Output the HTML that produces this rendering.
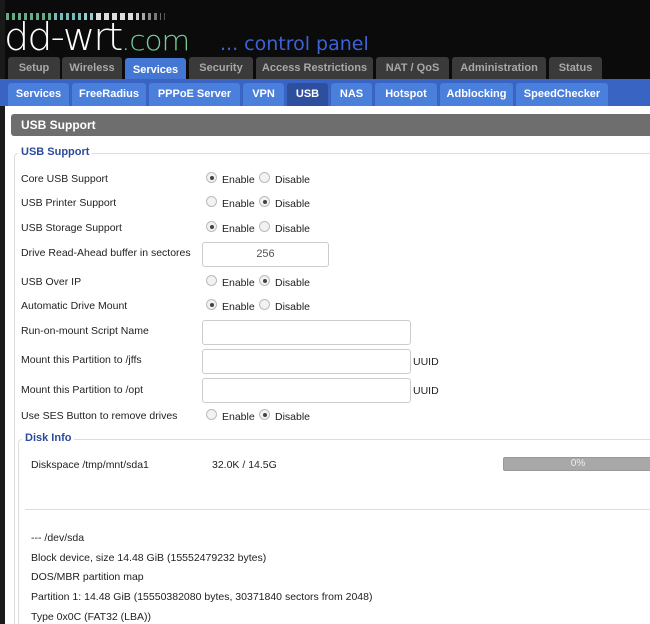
<!DOCTYPE html>
<html><head><style>
*{margin:0;padding:0;box-sizing:border-box}
html,body{width:650px;height:624px;overflow:hidden}
body{background:#fff;font-family:"Liberation Sans",sans-serif;font-size:11px;color:#222;position:relative}
.a{position:absolute}
.hdr{left:0;top:0;width:650px;height:80px;background:#0b0b0b}
.tab{position:absolute;top:57px;height:22px;background:#3a3a3a;color:#a8a8a8;font-weight:bold;font-size:11px;text-align:center;line-height:22px;border-radius:3px 3px 0 0}
.tab.on{background:#4477d4;color:#fff;top:58px;height:24px;line-height:24px}
.bar{left:0;top:79px;width:650px;height:27px;background:#3a64c4}
.st{position:absolute;top:83px;height:23px;background:#4a7fdc;color:#fff;font-weight:bold;font-size:11px;text-align:center;line-height:22px;border-radius:3px 3px 0 0}
.st.on{background:#2d4f9e}
.lbl{position:absolute;left:21px;font-size:10.5px}
.r{position:absolute;width:11px;height:11px;border-radius:50%;border:1px solid #bbb;background:#f2f2f2}
.r.c::after{content:"";position:absolute;left:3px;top:3px;width:4px;height:4px;border-radius:50%;background:#444}
.in{position:absolute;border:1px solid #ccc;border-radius:3px;background:#fff}
.bars{position:absolute;left:6px;top:13px;height:7px;display:flex;gap:3px}
.bars i{display:block;width:3px;height:7px;background:#6a8}
</style></head><body>
<div class="a hdr"></div>
<div class="a" style="left:0;top:0;width:5px;height:624px;background:#1a1a1a"></div>
<div class="bars"><i></i><i></i><i></i><i></i><i></i><i></i><i></i><i></i><i style="background:#7bb"></i><i style="background:#7bb"></i><i style="background:#7bb"></i><i style="background:#7bb"></i><i style="background:#7bb"></i><i style="background:#9cc"></i><i style="background:#9cc"></i><i style="background:#ddd;width:5px"></i><i style="background:#ddd;width:5px"></i><i style="background:#ddd;width:5px"></i><i style="background:#ddd;width:5px"></i><i style="background:#ddd;width:5px"></i><i style="background:#ccc"></i><i style="background:#aaa"></i><i style="background:#888"></i><i style="background:#777"></i><i style="background:#666;width:1px"></i><i style="background:#555;width:1px"></i></div>
<div class="a" style="left:4px;top:17px;color:#fff;font-size:38px;letter-spacing:-2px;font-family:'DejaVu Sans',sans-serif;font-weight:200;line-height:40px;transform:scaleX(1.05);transform-origin:left">dd-wrt<span style="font-size:28px;color:#7c9;letter-spacing:-1px">.com</span></div>
<div class="a" style="left:220px;top:33px;color:#3d62d6;font-size:19px;font-family:'DejaVu Sans',sans-serif">... control panel</div>
<div class="tab" style="left:8px;width:52px">Setup</div>
<div class="tab" style="left:62px;width:60px">Wireless</div>
<div class="tab on" style="left:125px;width:61px">Services</div>
<div class="tab" style="left:189px;width:64px">Security</div>
<div class="tab" style="left:256px;width:117px">Access Restrictions</div>
<div class="tab" style="left:376px;width:73px">NAT / QoS</div>
<div class="tab" style="left:452px;width:94px">Administration</div>
<div class="tab" style="left:549px;width:53px">Status</div>
<div class="a bar"></div>
<div class="st" style="left:8px;width:61px">Services</div>
<div class="st" style="left:72px;width:74px">FreeRadius</div>
<div class="st" style="left:149px;width:91px">PPPoE Server</div>
<div class="st" style="left:243px;width:41px">VPN</div>
<div class="st on" style="left:287px;width:41px">USB</div>
<div class="st" style="left:331px;width:41px">NAS</div>
<div class="st" style="left:375px;width:62px">Hotspot</div>
<div class="st" style="left:440px;width:73px">Adblocking</div>
<div class="st" style="left:516px;width:92px">SpeedChecker</div>
<div class="a" style="left:11px;top:114px;width:645px;height:22px;background:#6e6e6e;border-radius:3px;color:#fff;font-weight:bold;font-size:12px;line-height:22px;padding-left:10px">USB Support</div>
<div class="a" style="left:14px;top:153px;width:640px;height:480px;border:1px solid #ddd;border-radius:4px"></div>
<div class="a" style="left:18px;top:146px;background:#fff;padding:0 3px;color:#2b4b9a;font-weight:bold;font-size:11px">USB Support</div>
<div class="lbl" style="top:173px">Core USB Support</div>
<div class="lbl" style="top:197px">USB Printer Support</div>
<div class="lbl" style="top:222px">USB Storage Support</div>
<div class="lbl" style="top:247px">Drive Read-Ahead buffer in sectores</div>
<div class="lbl" style="top:276px">USB Over IP</div>
<div class="lbl" style="top:300px">Automatic Drive Mount</div>
<div class="lbl" style="top:325px">Run-on-mount Script Name</div>
<div class="lbl" style="top:354px">Mount this Partition to /jffs</div>
<div class="lbl" style="top:384px">Mount this Partition to /opt</div>
<div class="lbl" style="top:410px">Use SES Button to remove drives</div>
<div class="r c" style="left:206px;top:172px"></div><div class="lbl" style="left:222px;top:174px">Enable</div><div class="r" style="left:259px;top:172px"></div><div class="lbl" style="left:275px;top:174px">Disable</div>
<div class="r" style="left:206px;top:196px"></div><div class="lbl" style="left:222px;top:198px">Enable</div><div class="r c" style="left:259px;top:196px"></div><div class="lbl" style="left:275px;top:198px">Disable</div>
<div class="r c" style="left:206px;top:221px"></div><div class="lbl" style="left:222px;top:223px">Enable</div><div class="r" style="left:259px;top:221px"></div><div class="lbl" style="left:275px;top:223px">Disable</div>
<div class="in" style="left:202px;top:242px;width:127px;height:25px;text-align:center;line-height:23px;color:#555">256</div>
<div class="r" style="left:206px;top:275px"></div><div class="lbl" style="left:222px;top:277px">Enable</div><div class="r c" style="left:259px;top:275px"></div><div class="lbl" style="left:275px;top:277px">Disable</div>
<div class="r c" style="left:206px;top:299px"></div><div class="lbl" style="left:222px;top:301px">Enable</div><div class="r" style="left:259px;top:299px"></div><div class="lbl" style="left:275px;top:301px">Disable</div>
<div class="in" style="left:202px;top:320px;width:209px;height:25px"></div>
<div class="in" style="left:202px;top:349px;width:209px;height:25px"></div><div class="lbl" style="left:413px;top:356px">UUID</div>
<div class="in" style="left:202px;top:378px;width:209px;height:25px"></div><div class="lbl" style="left:413px;top:385px">UUID</div>
<div class="r" style="left:206px;top:409px"></div><div class="lbl" style="left:222px;top:411px">Enable</div><div class="r c" style="left:259px;top:409px"></div><div class="lbl" style="left:275px;top:411px">Disable</div>
<div class="a" style="left:18px;top:439px;width:640px;height:200px;border:1px solid #ddd;border-radius:4px"></div>
<div class="a" style="left:22px;top:432px;background:#fff;padding:0 3px;color:#2b4b9a;font-weight:bold;font-size:11px">Disk Info</div>
<div class="lbl" style="left:31px;top:459px">Diskspace /tmp/mnt/sda1</div>
<div class="lbl" style="left:212px;top:459px">32.0K / 14.5G</div>
<div class="a" style="left:503px;top:457px;width:150px;height:14px;background:#a8a8a8;border:1px solid #999;border-radius:2px;color:#eee;font-size:10px;text-align:center;line-height:12px">0%</div>
<div class="a" style="left:25px;top:509px;width:630px;height:1px;background:#ddd"></div>
<div class="lbl" style="left:31px;top:532px">--- /dev/sda</div>
<div class="lbl" style="left:31px;top:552px">Block device, size 14.48 GiB (15552479232 bytes)</div>
<div class="lbl" style="left:31px;top:571px">DOS/MBR partition map</div>
<div class="lbl" style="left:31px;top:591px">Partition 1: 14.48 GiB (15550382080 bytes, 30371840 sectors from 2048)</div>
<div class="lbl" style="left:31px;top:611px">Type 0x0C (FAT32 (LBA))</div>
</body></html>
